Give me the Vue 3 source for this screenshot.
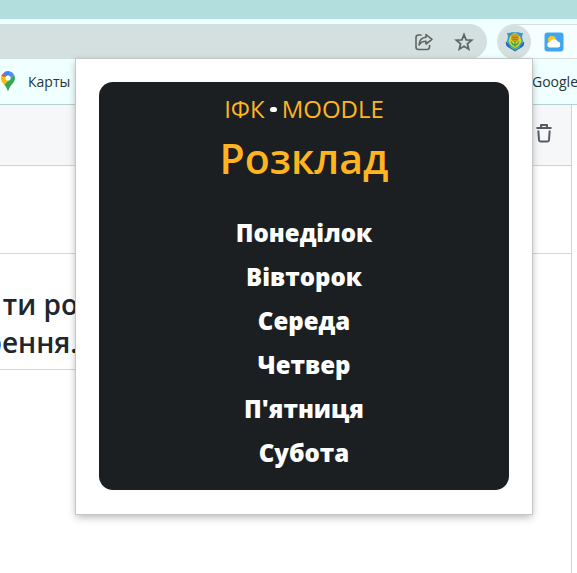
<script setup>
const days = ['Понеділок', 'Вівторок', 'Середа', 'Четвер', "П'ятниця", 'Субота']
</script>

<template>
  <div class="browser">
    <div class="tabs"></div>
    <div class="toolbar">
      <div class="address">
        <button class="icon-button" aria-label="Поділитися">
          <svg width="20" height="20" viewBox="0 0 20 20" fill="none" stroke="#5f6664" stroke-width="1.6" stroke-linejoin="round" stroke-linecap="round">
            <path d="M7 3H4.500Q2 3 2 5.500V15Q2 17.500 4.500 17.500H13Q15.500 17.500 15.500 15V13.500" />
            <path d="M12 2.500 18 7.300 12 12V9.200C8.500 9.200 6.500 10.500 5 13C5.400 8.500 8 5.600 12 5.300Z" />
          </svg>
        </button>
        <button class="icon-button" aria-label="Додати закладку">
          <svg width="20" height="20" viewBox="0 0 20 20" fill="none" stroke="#5f6664" stroke-width="1.8">
            <path d="M10 2.700 12.100 7.800 17.600 8.200 13.400 11.800 14.700 17.200 10 14.300 5.300 17.200 6.600 11.800 2.400 8.200 7.900 7.800Z" />
          </svg>
        </button>
      </div>
      <div class="extensions">
        <button class="extension active" aria-label="Розклад">
          <svg width="20" height="20" viewBox="0 0 20 20">
            <path d="M1 9.500 3 11 10 15 17 11 19 9.500Q20 14 16.500 15.500L13 17.500 10 19.500 7 17.500 3.500 15.500Q0 14 1 9.500Z" fill="#2868b5" />
            <path d="M2 .8Q4.500 1.500 6.500 .3H13.500Q15.500 1.500 18 .8L17 5 18 9Q17 14.500 10 17.500Q3 14.500 2 9L3 5Z" fill="#3697cc" />
            <path d="M5 4.500Q8 1.200 10 1Q12 1.200 15 4.500L16.500 9Q15 14 10 16Q5 14 3.500 9Z" fill="#d8dc25" />
            <circle cx="10" cy="6" r="4" fill="#c99b22" />
            <path d="M7 5.500H13M7.500 7.500H12.500" stroke="#7f8d2b" stroke-width="1" />
            <path d="M10 9V15M6 9.500Q7 12.500 10 13.500Q13 12.500 14 9.500" fill="none" stroke="#42a343" stroke-width="1.300" />
            <path d="M5.500 15 10 17.500 14.500 15" fill="none" stroke="#73bd61" />
          </svg>
        </button>
        <button class="extension" aria-label="Погода">
          <svg width="20" height="20" viewBox="0 0 20 20">
            <rect x=".5" y=".5" width="19" height="19" rx="3" fill="#42a5f0" />
            <circle cx="8" cy="8" r="4" fill="#ffc41f" />
            <path d="M6 15.500A2.700 2.700 0 0 1 6 10.100A4.100 4.100 0 0 1 13.700 9.600A3 3 0 0 1 14 15.500Z" fill="#fff" />
          </svg>
        </button>
      </div>
    </div>
    <nav class="bookmarks">
      <a class="bookmark" href="#maps">
        <svg width="16" height="20" viewBox="0 0 16 20">
          <path d="M3 2.500A7 7 0 0 1 10 .4L8 7Z" fill="#4285f4" />
          <path d="M9.500 .3A7 7 0 0 1 14.200 4L5 13 8 7Z" fill="#4d8df6" />
          <path d="M3 2.400A7 7 0 0 0 1.300 5L6 9 8 7Z" fill="#ea4335" />
          <path d="M1.300 4.500Q.2 8 2 11L4.500 14 11 6.500 8 7Z" fill="#fbbc04" />
          <path d="M14.200 4Q16 8 13.500 11.500C11 14.500 9.500 16 8.700 19Q8 20.500 7.300 19C6.600 16.500 5.500 15 4.300 13.700Z" fill="#34a853" />
          <circle cx="8" cy="7" r="2.600" fill="#fff" />
        </svg>
        Карты
      </a>
      <a class="bookmark last" href="#google">Google</a>
    </nav>
    <main class="page">
      <div class="page-bar">
        <button class="icon-button" aria-label="Видалити">
          <svg width="20" height="22" viewBox="0 0 20 22" fill="none" stroke="#555b64" stroke-width="2" stroke-linejoin="round">
            <path d="M2.500 6H17.500M7 6V3H13V6M4.300 8.500 5 18Q5.100 19.500 6.500 19.500H13.500Q14.900 19.500 15 18L15.700 8.500" />
          </svg>
        </button>
      </div>
      <div class="spacer"></div>
      <section class="question">
        <p>ти ро</p>
        <p>рення.</p>
      </section>
    </main>
    <aside class="popup">
      <div class="card">
        <div class="brand">ІФК<span class="dot"></span>MOODLE</div>
        <h1>Розклад</h1>
        <ul>
          <li v-for="day in days" :key="day"><a href="#day">{{ day }}</a></li>
        </ul>
      </div>
    </aside>
  </div>
</template>

<style>
body {
  background: #fff;
}
</style>

<style scoped>
.browser {
  position: relative;
  display: flex;
  flex-direction: column;
  min-height: 100vh;
  overflow: hidden;
  font-family: "Open Sans", "Noto Sans", sans-serif;
}
button {
  display: flex;
  align-items: center;
  justify-content: center;
  padding: 0;
  border: 0;
  background: none;
}
a {
  color: inherit;
  text-decoration: none;
}
.tabs {
  height: 19px;
  background: #b2dfdd;
}
.toolbar {
  display: flex;
  gap: 10px;
  height: 35px;
  padding-top: 5px;
  background: #f0ffff;
}
.address {
  flex: 1;
  display: flex;
  align-items: center;
  justify-content: flex-end;
  gap: 20px;
  padding-right: 13px;
  border-radius: 0 18px 18px 0;
  background: #d4e0e0;
}
.icon-button {
  width: 20px;
  height: 22px;
}
.extensions {
  box-sizing: border-box;
  display: flex;
  align-items: center;
  gap: 13px;
  width: 80px;
  border: 1px solid #d4e0e0;
  border-right: 0;
  border-radius: 18px 0 0 18px;
  background: #f5ffff;
}
.extension {
  width: 20px;
  height: 34px;
}
.extension.active {
  width: 33px;
  border-radius: 50%;
  background: #d4e0e0;
}
.bookmarks {
  box-sizing: border-box;
  display: flex;
  justify-content: space-between;
  align-items: center;
  height: 46px;
  padding-bottom: 1px;
  border-bottom: 1px solid #b5d0d0;
  background: #f0ffff;
  color: #263636;
  font-size: 14px;
}
.bookmark {
  display: flex;
  align-items: center;
  gap: 12px;
}
.bookmark.last {
  width: 45px;
  white-space: nowrap;
}
.page {
  flex: 1;
  margin-right: 5px;
  border-right: 1px solid #cfd3d9;
}
.page-bar {
  display: flex;
  justify-content: flex-end;
  height: 43px;
  padding: 17px 17px 0 0;
  border-bottom: 1px solid #cfd3d9;
  background: #f6f7f9;
}
.spacer {
  height: 87px;
  border-bottom: 1px solid #d4d6d9;
}
.question {
  display: flex;
  flex-direction: column;
  align-items: flex-end;
  width: 78px;
  padding: 31px 0 8px;
  box-shadow: 0 1px #d4d6d9;
  color: #20262e;
  font-size: 28px;
  font-weight: 600;
  line-height: 38px;
}
.question p {
  margin: 0;
}
.popup {
  position: absolute;
  top: 59px;
  right: 45px;
  box-sizing: border-box;
  width: 456px;
  padding: 23px 23px 24px;
  background: #fff;
  box-shadow: 0 0 0 1px #c4c7c8, 0 3px 8px rgba(0, 0, 0, 0.3);
}
.card {
  padding: 10px 20px 15px;
  border-radius: 14px;
  background: #1b1f22;
  color: #fff;
  text-align: center;
}
.brand {
  display: flex;
  justify-content: center;
  align-items: center;
  gap: 5px;
  color: #ffb420;
  font-size: 24px;
  font-weight: 400;
  line-height: 34px;
}
.dot {
  width: 7px;
  height: 5px;
  border-radius: 3px;
  background: #fff;
}
h1 {
  margin: 0;
  color: #ffb420;
  font-size: 41px;
  font-weight: 600;
  line-height: 64px;
}
ul {
  margin: 0;
  padding: 21px 0 0;
  list-style: none;
}
li {
  font-size: 24px;
  font-weight: 800;
  line-height: 44px;
}
</style>
